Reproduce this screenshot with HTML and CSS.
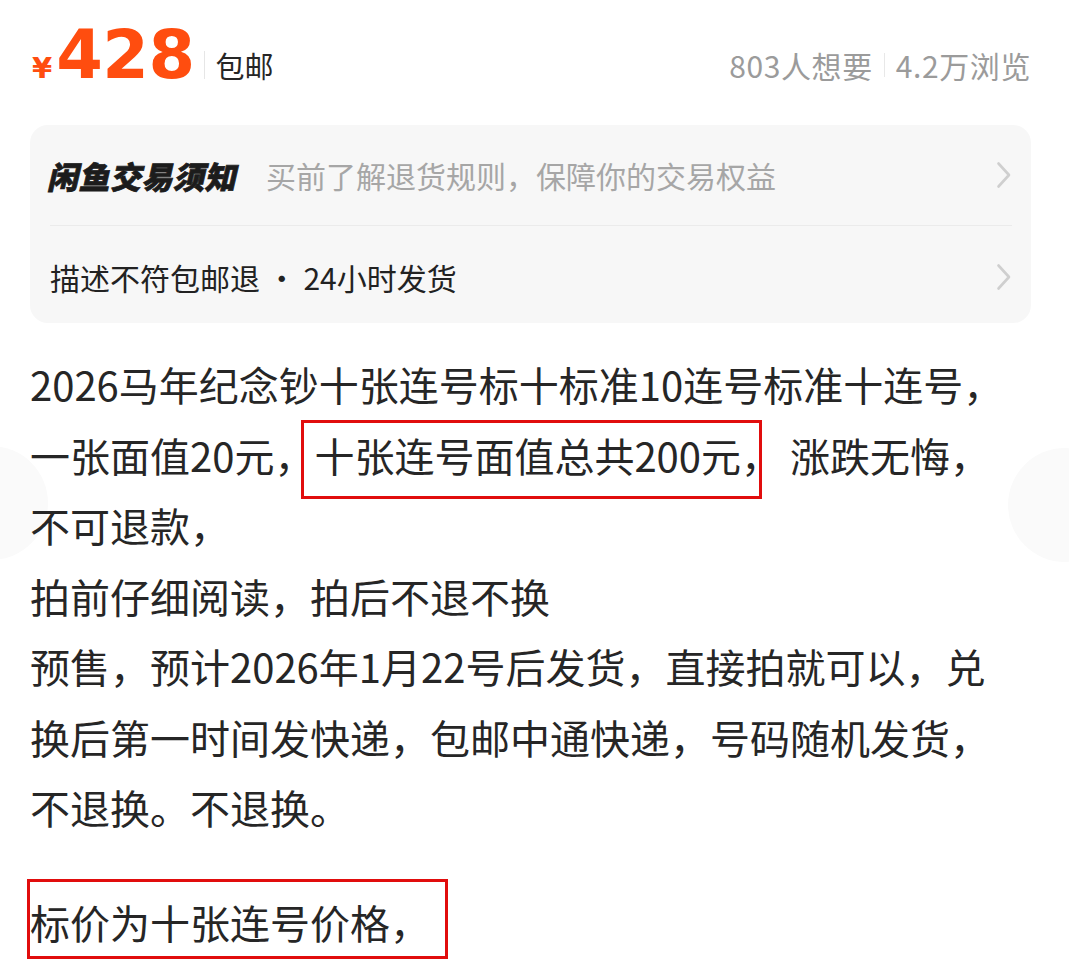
FILE: index.html
```html
<!DOCTYPE html>
<html lang="zh-CN">
<head>
<meta charset="utf-8">
<title>闲鱼商品详情</title>
<link rel="stylesheet" href="styles.css">
</head>
<body>
<div class="ghost ghost-left"></div>
<div class="ghost ghost-right"></div>
<main class="page">
  <header class="top">
    <div class="price-group">
      <div class="price"><span class="yen">¥</span><span class="amount">428</span></div>
      <span class="ship">包邮</span>
    </div>
    <div class="stats">
      <span class="stat">803人想要</span>
      <span class="stat stat-sep">4.2万浏览</span>
    </div>
  </header>

  <section class="notice">
    <div class="notice-row">
      <div class="notice-text">
        <span class="notice-title">闲鱼交易须知</span>
        <span class="notice-sub">买前了解退货规则，保障你的交易权益</span>
      </div>
      <svg class="chev" width="16" height="28" viewBox="0 0 16 28"><polyline points="2.5,2.5 13,14 2.5,25.5" fill="none" stroke="#cfcfcf" stroke-width="2.6" stroke-linecap="round" stroke-linejoin="round"/></svg>
    </div>
    <div class="notice-row notice-row-2">
      <div class="notice-text">
        <span class="notice-main">描述不符包邮退 · 24小时发货</span>
      </div>
      <svg class="chev" width="16" height="28" viewBox="0 0 16 28"><polyline points="2.5,2.5 13,14 2.5,25.5" fill="none" stroke="#cfcfcf" stroke-width="2.6" stroke-linecap="round" stroke-linejoin="round"/></svg>
    </div>
  </section>

  <article class="desc">
    <p class="para">2026马年纪念钞十张连号标十标准10连号标准十连号，<br>一张面值20元，十张连号面值总共200元， 涨跌无悔，<br>不可退款，<br>拍前仔细阅读，拍后不退不换<br>预售，预计2026年1月22号后发货，直接拍就可以，兑<br>换后第一时间发快递，包邮中通快递，号码随机发货，<br>不退换。不退换。</p>
    <p class="para para-2">标价为十张连号价格，</p>
    <div class="mark mark-1"></div>
    <div class="mark mark-2"></div>
  </article>
</main>
</body>
</html>
```

FILE: styles.css
```css
html, body {
  margin: 0;
  padding: 0;
  background: #ffffff;
}

body {
  position: relative;
  width: 1069px;
  height: 974px;
  overflow: hidden;
  font-family: "Noto Sans CJK SC", "Noto Sans", sans-serif;
  color: #222222;
}

.ghost {
  position: absolute;
  width: 114px;
  height: 114px;
  border-radius: 50%;
  background: #fafafa;
  z-index: 0;
}

.ghost-left {
  left: -66px;
  top: 446px;
}

.ghost-right {
  left: 1008px;
  top: 448px;
}

.page {
  position: relative;
  z-index: 1;
  padding: 0 38px 0 30px;
}

.top {
  height: 125px;
  box-sizing: border-box;
  padding-top: 22px;
  display: flex;
  align-items: baseline;
  justify-content: space-between;
}

.price-group {
  display: flex;
  align-items: baseline;
}

.price {
  font-family: "DejaVu Sans", sans-serif;
  font-weight: bold;
  color: #ff4d0f;
  font-size: 67px;
  line-height: 67px;
  white-space: nowrap;
}

.yen {
  font-size: 29px;
  margin-left: 2px;
  margin-right: 4px;
}

.amount {
  letter-spacing: -0.5px;
}

.ship {
  font-size: 29px;
  line-height: 28px;
  color: #262626;
  margin-left: 9px;
  padding-left: 11px;
  border-left: 1.5px solid #e6e6e6;
}

.stats {
  display: flex;
  align-items: baseline;
}

.stat {
  font-size: 30px;
  line-height: 24px;
  color: #9b9b9b;
  letter-spacing: 0.6px;
}

.stat-sep {
  margin-left: 11px;
  padding-left: 11px;
  border-left: 1.5px solid #e8e8e8;
}

.notice {
  background: #f7f7f7;
  border-radius: 18px;
  padding: 0 19px 0 20px;
}

.notice-row {
  height: 100px;
  display: flex;
  align-items: center;
  justify-content: space-between;
}

.notice-row-2 {
  height: 98px;
  box-sizing: border-box;
  padding-top: 4px;
  border-top: 1px solid #ebebeb;
}

.notice-text {
  display: flex;
  align-items: center;
  white-space: nowrap;
}

.notice-title {
  display: inline-block;
  font-size: 31px;
  font-weight: 900;
  color: #1c1c1c;
  letter-spacing: 0.5px;
  transform: skewX(-13deg);
  -webkit-text-stroke: 0.8px #1c1c1c;
}

.notice-sub {
  font-size: 30px;
  color: #a6a6a6;
  margin-left: 27px;
}

.notice-main {
  font-size: 30px;
  color: #222222;
}

.chev {
  display: block;
  flex: none;
}

.desc {
  position: relative;
  margin-top: 26px;
}

.para {
  margin: 0;
  font-size: 40px;
  line-height: 70.5px;
  color: #262626;
  white-space: nowrap;
}

.para-2 {
  margin-top: 44.5px;
}

.mark {
  position: absolute;
  border: 3px solid #e10d0d;
  box-sizing: border-box;
}

.mark-1 {
  left: 271px;
  top: 71px;
  width: 461px;
  height: 79px;
}

.mark-2 {
  left: -3px;
  top: 530px;
  width: 421px;
  height: 80px;
}
```
